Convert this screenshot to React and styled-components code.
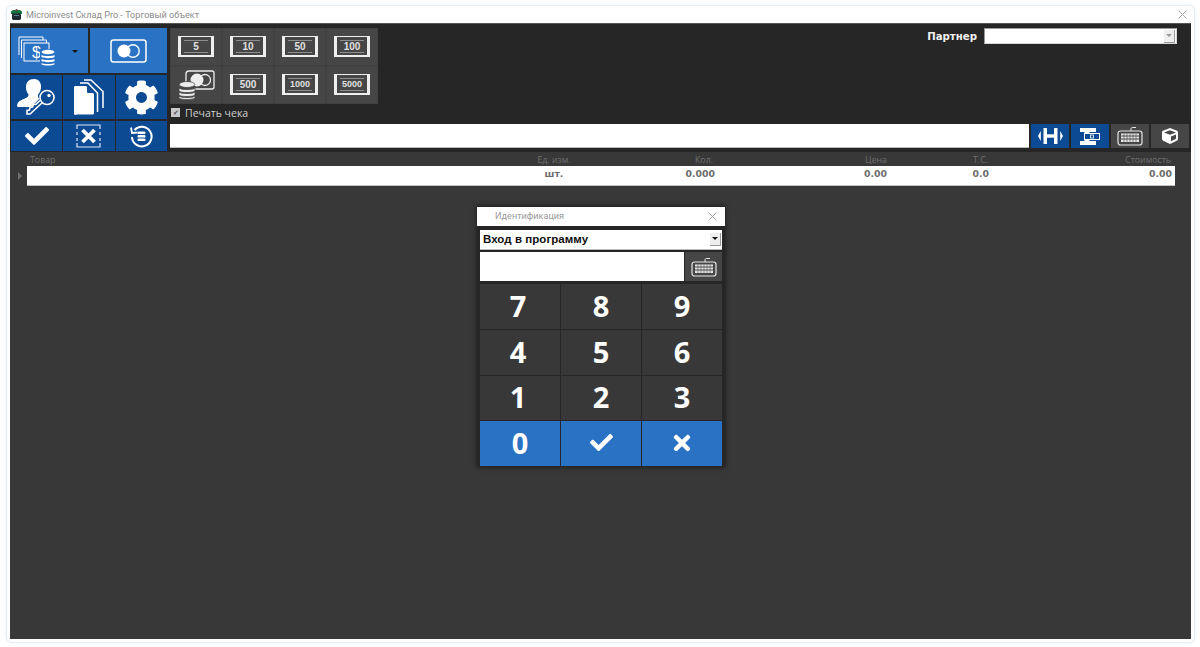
import React from "react"
import styled, { createGlobalStyle } from "styled-components"
import { FaCog, FaCheck, FaTimes, FaCube } from "react-icons/fa"

const GlobalStyle = createGlobalStyle`
  html, body {
    margin: 0;
    padding: 0;
    background: #ffffff;
    overflow: hidden;
  }
  * { box-sizing: border-box; }
`

const COLOR = {
  BLUE: "#2a72c3",
  NAVY: "#0d4a94",
  DARK: "#262626",
  BODY: "#383838",
  TILE: "#464646",
}

const Page = styled.div`
  width: 1200px;
  height: 647px;
  padding: 5px 5px 4px 6px;
  background: #ffffff;
  font-family: "Roboto", sans-serif;
`

const Frame = styled.div`
  height: 100%;
  display: flex;
  flex-direction: column;
  padding: 0 3px 3px 3px;
  border: 1px solid #e4eef3;
  border-radius: 6px;
  background: #ffffff;
  box-shadow: 0 0 3px #e4f0f6;
`

const TitleBar = styled.div`
  height: 17px;
  flex: none;
  display: flex;
  align-items: center;
  gap: 3px;
  padding: 0 4px 0 0;
  font-size: 9.1px;
  color: #8c8c8c;
`

const TitleText = styled.span`
  flex: 1;
`

const CloseMark = styled.svg`
  width: 9px;
  height: 9px;
  stroke: ${(p) => p.$color || "#a8a8a8"};
  stroke-width: 1;
  fill: none;
  flex: none;
`

const Desktop = styled.div`
  flex: 1;
  display: flex;
  flex-direction: column;
  background: ${COLOR.BODY};
  border-top: 1px solid #555;
  min-height: 0;
`

const TopPanel = styled.div`
  height: 128px;
  flex: none;
  display: flex;
  background: ${COLOR.DARK};
  padding: 4px 2px 0 1px;
  gap: 3px;
`

const MenuGrid = styled.div`
  width: 156px;
  height: 123px;
  flex: none;
  display: flex;
  flex-direction: column;
  gap: 2px;
`

const MenuRow = styled.div`
  display: flex;
  gap: ${(p) => p.$gap || 1}px;
  height: ${(p) => p.$h}px;
  flex: none;
`

const MenuTile = styled.div`
  flex: 1 1 0;
  min-width: 0;
  display: flex;
  align-items: center;
  justify-content: center;
  position: relative;
  background: ${(p) => (p.$light ? COLOR.BLUE : COLOR.NAVY)};
  color: #fff;
`

const CashSlot = styled.span`
  display: flex;
  margin-right: 25px;
`

const Caret = styled.span`
  position: absolute;
  right: 10px;
  top: 22px;
  border-left: 3px solid transparent;
  border-right: 3px solid transparent;
  border-top: 3px solid #111;
`

const CenterColumn = styled.div`
  flex: 1;
  min-width: 0;
  display: flex;
  flex-direction: column;
`

const CashArea = styled.div`
  height: 95px;
  flex: none;
  display: flex;
  justify-content: space-between;
`

const CashColumn = styled.div`
  display: flex;
  flex-direction: column;
`

const CashGrid = styled.div`
  width: 208px;
  display: grid;
  grid-template-columns: repeat(4, 52px);
  grid-template-rows: 38px 38px;
  gap: 0;
`

const CashTile = styled.div`
  display: flex;
  align-items: center;
  justify-content: center;
  background: ${COLOR.TILE};
  box-shadow: inset 0 0 0 0.5px #3c3c3c;
`

const Note = styled.div`
  width: 36px;
  height: 21px;
  display: flex;
  flex-direction: column;
  align-items: center;
  justify-content: center;
  padding: 3px 3px 2px;
  margin-top: -1px;
  border-style: solid;
  border-color: #eeeeee;
  border-width: 1px 3px 2px 3px;
  font-family: "Liberation Sans", sans-serif;
  font-weight: 700;
  font-size: ${(p) => (p.$wide ? 9 : 10)}px;
  line-height: 1;
  color: #e0e0e0;
`

const NoteLine = styled.span`
  width: 100%;
  height: 1px;
  flex: none;
  background: #8d8d8d;
`

const NoteValue = styled.span`
  flex: 1;
  display: flex;
  align-items: center;
`

const PrintRow = styled.label`
  display: flex;
  align-items: center;
  gap: 5px;
  height: 17px;
  font-family: "Open Sans", sans-serif;
  font-size: 10.5px;
  color: #cfcfcf;
`

const CheckBox = styled.span`
  width: 9px;
  height: 9px;
  display: flex;
  align-items: center;
  justify-content: center;
  background: #c9c9c9;
  color: #555;
  font-size: 7px;
  margin-left: 1px;
`

const PartnerBox = styled.div`
  display: flex;
  align-items: center;
  gap: 7px;
  height: 18px;
  margin: -1px 12px 0 0;
  font-family: "DejaVu Sans", sans-serif;
  font-weight: 700;
  font-size: 10.2px;
  color: #f0f0f0;
`

const ComboWide = styled.div`
  width: 193px;
  height: 16px;
  display: flex;
  justify-content: flex-end;
  align-items: center;
  padding-right: 1px;
  background: #fff;
  border: 1px solid #9a9a9a;
  border-right-color: #d8d8d8;
  border-bottom-color: #d8d8d8;
`

const ComboArrow = styled.span`
  width: 11px;
  height: 13px;
  display: flex;
  align-items: center;
  justify-content: center;
  background: #efefef;
  border-right: 1px solid #999;
  border-bottom: 1px solid #999;

  &::after {
    content: "";
    border-left: 3px solid transparent;
    border-right: 3px solid transparent;
    border-top: 3px solid ${(p) => (p.$dark ? "#111" : "#9a9a9a")};
  }
`

const SearchRow = styled.div`
  height: 24px;
  flex: none;
  margin-top: 1px;
  display: flex;
  gap: 2px;
`

const SearchInput = styled.div`
  flex: 1;
  background: #fff;
  border-bottom: 1px solid #bbb;
`

const ToolButton = styled.div`
  width: 38px;
  flex: none;
  display: flex;
  align-items: center;
  justify-content: center;
  background: ${(p) => (p.$blue ? COLOR.NAVY : COLOR.TILE)};
  color: #fff;
`

const TableArea = styled.div`
  flex: 1;
  position: relative;
  padding: 0 16px 0 1px;
  min-height: 0;
`

const Columns = styled.div`
  display: grid;
  grid-template-columns: 480px 94px 114px 172px 102px 183px;
  padding-right: 3px;
`

const HeadRow = styled(Columns)`
  height: 14px;
  margin-left: 16px;
  padding-top: 1px;
  align-items: center;
  font-family: "Open Sans", sans-serif;
  font-size: 8.8px;
  color: #6f6f6f;
`

const HeadCell = styled.div`
  text-align: ${(p) => p.$align || "right"};
  padding-left: ${(p) => (p.$align === "left" ? 3 : 0)}px;
  padding-right: ${(p) => p.$inset || 0}px;
`

const BodyLine = styled.div`
  display: flex;
  align-items: center;
  gap: 4px;
`

const RowMarker = styled.span`
  width: 0;
  height: 0;
  margin-left: 7px;
  margin-right: 1px;
  border-top: 4px solid transparent;
  border-bottom: 4px solid transparent;
  border-left: 4px solid #6e6e6e;
`

const DataRow = styled(Columns)`
  flex: 1;
  height: 20px;
  align-items: start;
  padding-top: 2px;
  background: #fff;
  border-bottom: 1px solid #c4c4c4;
  font-family: "DejaVu Sans", sans-serif;
  font-weight: 700;
  font-size: 9.3px;
  line-height: 12px;
  color: #6c6c6c;
`

const Dialog = styled.div`
  position: absolute;
  left: 467px;
  top: 54px;
  width: 248px;
  height: 261px;
  display: flex;
  flex-direction: column;
  padding-top: 1px;
  background: ${COLOR.DARK};
  box-shadow: 0 0 5px rgba(0, 0, 0, 0.55);
`

const DialogTitle = styled.div`
  height: 19px;
  flex: none;
  display: flex;
  align-items: center;
  justify-content: space-between;
  padding: 0 8px 1px 18px;
  background: #fff;
  font-size: 9.1px;
  color: #9a9a9a;
`

const DialogBody = styled.div`
  flex: 1;
  display: flex;
  flex-direction: column;
  padding: 4px 3px 1px 3px;
`

const LoginSelect = styled.div`
  height: 20px;
  flex: none;
  display: flex;
  align-items: center;
  justify-content: space-between;
  padding: 0 1px 1px 3px;
  background: #fff;
  border-bottom: 1px solid #bbb;
  font-family: "Liberation Sans", sans-serif;
  font-weight: 700;
  font-size: 11.5px;
  letter-spacing: 0.05px;
  color: #101010;
`

const PasswordRow = styled.div`
  height: 29px;
  flex: none;
  margin-top: 2px;
  display: flex;
  gap: 1px;
`

const PasswordInput = styled.div`
  flex: 1;
  background: #fff;
`

const KeyboardButton = styled.div`
  width: 37px;
  flex: none;
  display: flex;
  align-items: center;
  justify-content: center;
  background: ${COLOR.TILE};
`

const Keypad = styled.div`
  flex: 1;
  margin-top: 3px;
  display: grid;
  grid-template-columns: repeat(3, 1fr);
  grid-template-rows: repeat(4, 1fr);
  gap: 1px;
  background: #262626;
`

const Key = styled.div`
  display: flex;
  align-items: center;
  justify-content: center;
  padding-bottom: 2px;
  padding-right: ${(p) => p.$nudge || 0}px;
  background: ${(p) => (p.$blue ? COLOR.BLUE : "#383838")};
  color: #fff;
  font-family: "Open Sans", sans-serif;
  font-weight: 700;
  font-size: 29px;
`

const AppLogo = () => (
  <svg width="13" height="13" viewBox="0 0 13 13">
    <path d="M1 3.5 3 2h7l2 1.5V6H1z" fill="#17733d" />
    <rect x="2" y="5.5" width="9" height="6.5" rx="1.4" fill="#1f2a33" />
    <rect x="4" y="7" width="5" height="1" fill="#5c7f8f" />
    <circle cx="6.5" cy="2" r="1" fill="#7a2e58" />
  </svg>
)

const CashIcon = () => (
  <svg width="38" height="32" viewBox="0 0 38 32" fill="none" stroke="#fff" strokeWidth="1">
    <path d="M1 20V2h24v3" />
    <path d="M3.5 23V5h25v3" />
    <rect x="6" y="8" width="25" height="18" fill={COLOR.BLUE} />
    <text x="14" y="23" fill="#fff" stroke="none" fontFamily="Liberation Sans" fontSize="16">$</text>
    <rect x="22" y="14" width="15" height="17" fill={COLOR.BLUE} stroke="none" />
    <g fill="#fff" stroke="none">
      <ellipse cx="30" cy="17" rx="6.5" ry="2.2" />
      <path d="M23.5 20c1.5 1.4 11.5 1.4 13 0v2c-1.5 1.6-11.5 1.6-13 0z" />
      <path d="M23.5 24c1.5 1.4 11.5 1.4 13 0v2c-1.5 1.6-11.5 1.6-13 0z" />
      <path d="M23.5 28c1.5 1.4 11.5 1.4 13 0v1.2c-1.5 1.8-11.5 1.8-13 0z" />
    </g>
  </svg>
)

const CardIcon = () => (
  <svg width="37" height="24" viewBox="0 0 37 24" fill="none" stroke="#fff">
    <rect x="1" y="1" width="35" height="22" rx="2.5" strokeWidth="1.5" />
    <circle cx="14" cy="12" r="6.5" fill="#fff" stroke="none" />
    <circle cx="23" cy="12" r="6.2" strokeWidth="1.4" />
  </svg>
)

const UserKeyIcon = () => (
  <svg width="39" height="38" viewBox="0 0 39 38">
    <path
      d="M17 1c5 0 7.500 4 7 9-.3 3-1.500 5-3 6.500v2c0 1 .5 1.500 1.500 2.200L14 29H1c-1.500 0-1-3 0-4.500 2-2.500 7-3.500 9.500-5.500.8-.7 1-1.500 1-2.500C9.500 14 9 11.500 9 9c0-5 3-8 8-8z"
      fill="#fff"
    />
    <g fill="none" stroke="#fff" strokeWidth="1.6">
      <circle cx="30" cy="19.500" r="7" />
      <path d="M25.500 24.500 13 36h-3v-3.500l2.500-.5.500-2.500 2.500-.5 1-2.500 2.500-.3 4-3.700" />
    </g>
    <circle cx="32" cy="17.500" r="1.700" fill="#fff" />
  </svg>
)

const DocsIcon = () => (
  <svg width="30" height="36" viewBox="0 0 30 36">
    <path d="M1 7h11l8 8v19a1.500 1.500 0 0 1-1.500 1.500h-16A1.500 1.500 0 0 1 0 34V8.500A1.500 1.500 0 0 1 1 7z" fill="#fff" />
    <path d="M13 7.500V13a1 1 0 0 0 1 1h5.500z" fill={COLOR.NAVY} />
    <g fill="none" stroke="#fff" strokeWidth="1.500">
      <path d="M6 4h8l9.500 10v19" />
      <path d="M10 1h7l12 11.500V29" />
    </g>
  </svg>
)

const VoidIcon = () => (
  <svg width="25" height="24" viewBox="0 0 25 24" fill="none" stroke="#dfe7f2" strokeWidth="1.200">
    <path d="M1 5V1h23v4M1 8v3M24 8v3M1 14v3M24 14v3M1 19v4h23v-4" />
    <path d="M6.500 6 18.500 18M18.500 6 6.500 18" stroke="#fff" strokeWidth="3.800" />
  </svg>
)

const ReturnIcon = () => (
  <svg width="23" height="23" viewBox="0 0 23 23" fill="none" stroke="#fff" strokeWidth="2">
    <path d="M4.500 5A9.800 9.800 0 1 1 2 12" />
    <path d="M1 2.500 2 8l5.500-.5" strokeWidth="1.800" />
    <g fill="#fff" stroke="none">
      <rect x="7.500" y="6.500" width="8" height="2.600" rx="1.200" />
      <rect x="7.500" y="10" width="8" height="2.600" rx="1.200" />
      <rect x="7.500" y="13.500" width="8" height="2.600" rx="1.200" />
    </g>
  </svg>
)

const CashCardIcon = () => (
  <svg width="37" height="30" viewBox="0 0 37 30">
    <path d="M8 12V4a3 3 0 0 1 3-3h23a2 2 0 0 1 2 2v14a2 2 0 0 1-2 2H17" fill="none" stroke="#eee" strokeWidth="1.300" />
    <circle cx="19" cy="10" r="6.500" fill="#eee" />
    <circle cx="27" cy="10" r="5.500" fill="none" stroke="#eee" strokeWidth="1.300" />
    <g fill="#eee" stroke={COLOR.TILE} strokeWidth="0.800">
      <ellipse cx="9" cy="14.500" rx="7.800" ry="3" />
      <path d="M1 18c1.500 2 14.500 2 16 0v3c-1.500 2-14.500 2-16 0z" />
      <path d="M1 22c1.500 2 14.500 2 16 0v3c-1.500 2-14.500 2-16 0z" />
      <path d="M1 26c1.500 2 14.500 2 16 0v2c-1.500 2-14.500 2-16 0z" />
    </g>
  </svg>
)

const DumbbellIcon = () => (
  <svg width="25" height="16" viewBox="0 0 25 16" fill="#fff">
    <path d="M2.800 3 0 8l2.800 5z" />
    <rect x="5.500" y="0" width="3.500" height="16" rx="0.500" />
    <rect x="8" y="6.300" width="9" height="3.400" />
    <rect x="16" y="0" width="3.500" height="16" rx="0.500" />
    <path d="M22.200 3 25 8l-2.800 5z" />
  </svg>
)

const ScaleIcon = () => (
  <svg width="20" height="17" viewBox="0 0 20 17">
    <rect x="0" y="0" width="16" height="4" fill="#fff" />
    <rect x="0" y="13" width="16" height="4" fill="#fff" />
    <rect x="4.500" y="4" width="5" height="9" fill="#fff" />
    <rect x="4.500" y="5.500" width="15" height="6" fill={COLOR.NAVY} stroke="#fff" />
    <rect x="10.500" y="7" width="3" height="3" fill="none" stroke="#fff" strokeWidth="0.800" />
  </svg>
)

const KeyboardIcon = () => (
  <svg width="26" height="20" viewBox="0 0 26 20" fill="none" stroke="#e6e6e6">
    <path d="M14 5V3c0-1 .5-1.500 1.500-1.500H19" strokeWidth="1" />
    <rect x="1" y="5" width="24" height="14" rx="2.500" strokeWidth="1.200" />
    <g stroke="none" fill="#e6e6e6">
      <rect x="4" y="7.500" width="18" height="2" />
      <rect x="4" y="10.500" width="18" height="2" />
      <rect x="4" y="13.500" width="18" height="2.500" />
    </g>
    <g stroke={COLOR.TILE} strokeWidth="0.600">
      <path d="M7 7.500v8.500M10 7.500v8.500M13 7.500v8.500M16 7.500v8.500M19 7.500v8.500" />
    </g>
  </svg>
)

const Close = ({ color }) => (
  <CloseMark viewBox="0 0 9 9" $color={color}>
    <path d="M0.500 0.500 8.500 8.500M8.500 0.500 0.500 8.500" />
  </CloseMark>
)

const Banknote = ({ value }) => (
  <CashTile>
    <Note $wide={value.length > 3}>
      <NoteLine />
      <NoteValue>{value}</NoteValue>
      <NoteLine />
    </Note>
  </CashTile>
)

const DIGITS = ["7", "8", "9", "4", "5", "6", "1", "2", "3"]

const App = () => (
  <Page>
    <GlobalStyle />
    <Frame>
      <TitleBar>
        <AppLogo />
        <TitleText>Microinvest Склад Pro - Торговый объект</TitleText>
        <Close />
      </TitleBar>
      <Desktop>
        <TopPanel>
          <MenuGrid>
            <MenuRow $h={45} $gap={2}>
              <MenuTile $light><CashSlot><CashIcon /></CashSlot><Caret /></MenuTile>
              <MenuTile $light><CardIcon /></MenuTile>
            </MenuRow>
            <MenuRow $h={44}>
              <MenuTile><UserKeyIcon /></MenuTile>
              <MenuTile><DocsIcon /></MenuTile>
              <MenuTile><FaCog size={35} /></MenuTile>
            </MenuRow>
            <MenuRow $h={30}>
              <MenuTile><FaCheck size={24} /></MenuTile>
              <MenuTile><VoidIcon /></MenuTile>
              <MenuTile><ReturnIcon /></MenuTile>
            </MenuRow>
          </MenuGrid>
          <CenterColumn>
            <CashArea>
              <CashColumn>
                <CashGrid>
                  <Banknote value="5" />
                  <Banknote value="10" />
                  <Banknote value="50" />
                  <Banknote value="100" />
                  <CashTile><CashCardIcon /></CashTile>
                  <Banknote value="500" />
                  <Banknote value="1000" />
                  <Banknote value="5000" />
                </CashGrid>
                <PrintRow>
                  <CheckBox>✔</CheckBox>
                  Печать чека
                </PrintRow>
              </CashColumn>
              <PartnerBox>
                Партнер
                <ComboWide><ComboArrow /></ComboWide>
              </PartnerBox>
            </CashArea>
            <SearchRow>
              <SearchInput />
              <ToolButton $blue><DumbbellIcon /></ToolButton>
              <ToolButton $blue><ScaleIcon /></ToolButton>
              <ToolButton><KeyboardIcon /></ToolButton>
              <ToolButton><FaCube size={16} /></ToolButton>
            </SearchRow>
          </CenterColumn>
        </TopPanel>
        <TableArea>
          <HeadRow>
            <HeadCell $align="left">Товар</HeadCell>
            <HeadCell $align="center">Ед. изм.</HeadCell>
            <HeadCell $inset={2}>Кол.</HeadCell>
            <HeadCell>Цена</HeadCell>
            <HeadCell $inset={1}>Т.С.</HeadCell>
            <HeadCell $inset={1}>Стоимость</HeadCell>
          </HeadRow>
          <BodyLine>
            <RowMarker />
            <DataRow>
              <span />
              <HeadCell $align="center">шт.</HeadCell>
              <HeadCell>0.000</HeadCell>
              <HeadCell>0.00</HeadCell>
              <HeadCell>0.0</HeadCell>
              <HeadCell>0.00</HeadCell>
            </DataRow>
          </BodyLine>
          <Dialog>
            <DialogTitle>
              Идентификация
              <Close />
            </DialogTitle>
            <DialogBody>
              <LoginSelect>
                Вход в программу
                <ComboArrow $dark />
              </LoginSelect>
              <PasswordRow>
                <PasswordInput />
                <KeyboardButton><KeyboardIcon /></KeyboardButton>
              </PasswordRow>
              <Keypad>
                {DIGITS.map((d, i) => <Key key={d} $nudge={i % 3 === 0 ? 4 : 0}>{d}</Key>)}
                <Key $blue>0</Key>
                <Key $blue><FaCheck size={23} /></Key>
                <Key $blue><FaTimes size={24} /></Key>
              </Keypad>
            </DialogBody>
          </Dialog>
        </TableArea>
      </Desktop>
    </Frame>
  </Page>
)

export default App
